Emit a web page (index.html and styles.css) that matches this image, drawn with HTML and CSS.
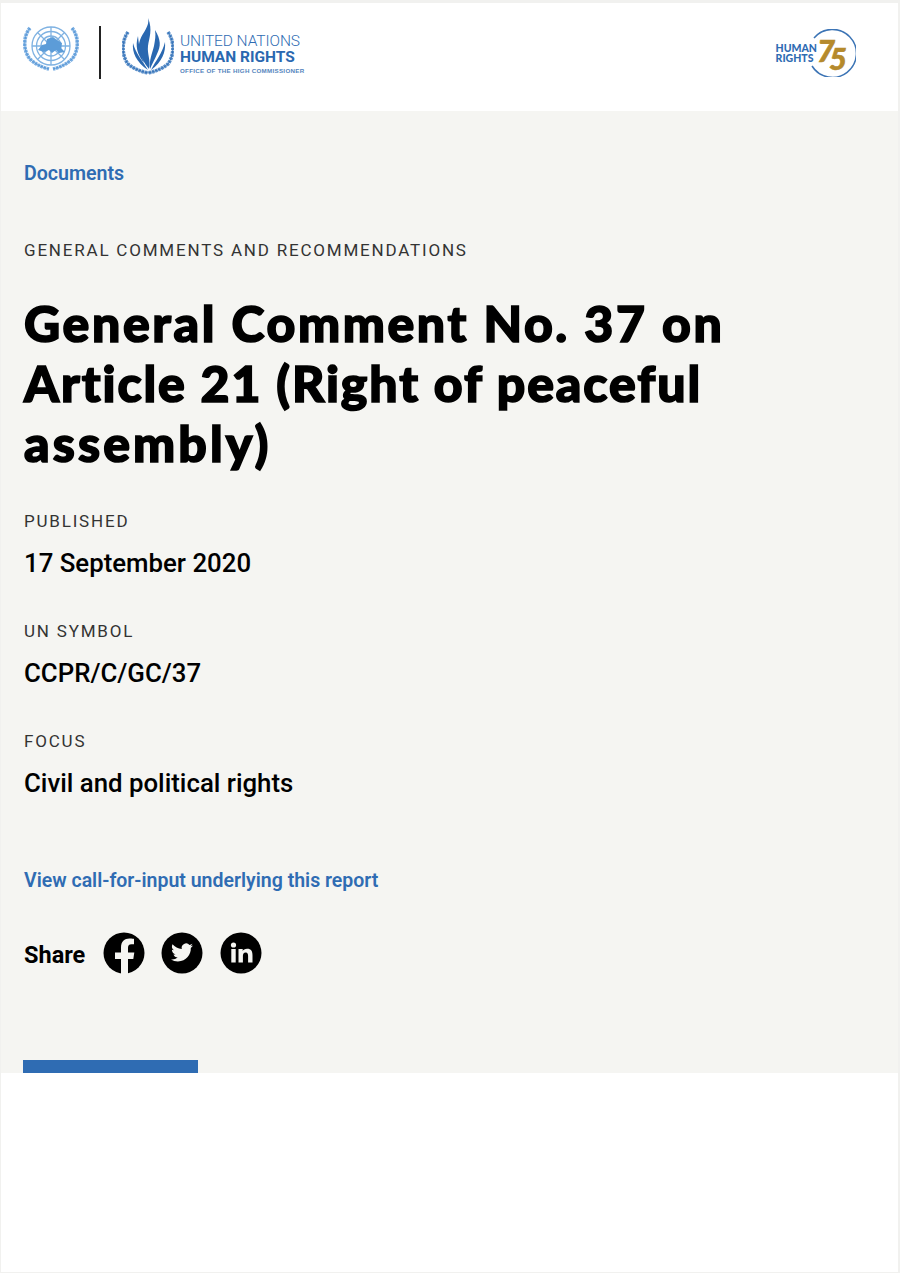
FILE: index.html
```html
<!DOCTYPE html>
<html lang="en">
<head>
<meta charset="utf-8">
<title>General Comment No. 37</title>
<link rel="stylesheet" href="styles.css">
</head>
<body>
<div class="page">
  <header class="top">
    <div class="brand">
      <svg class="un" width="56" height="48" viewBox="0 0 56 48" fill="none">
        <g stroke="#7fb2e2" stroke-width="1.300">
          <circle cx="28" cy="21" r="19"/><circle cx="28" cy="21" r="14.500"/><circle cx="28" cy="21" r="10"/>
          <path d="M28 2v38M9 21h38M14.500 7.500l27 27M41.500 7.500l-27 27"/>
        </g>
        <path d="M15 25l4-5 4-1 1-5 6-2 4 3 5 3-1 5 4 4-6 1-3-3-4 3-3-3-5 2z" fill="#5c9cd8"/>
        <g stroke="#79aee3" stroke-width="3.600" stroke-dasharray="2.600 .7" fill="none">
          <path d="M7 3C0 11 0 26 7 34c5 5 11 8 19 10"/>
          <path d="M49 3c7 8 7 23 0 31-5 5-11 8-19 10"/>
        </g>
        <path d="M7 3C0 11 0 26 7 34c5 5 11 8 19 10M49 3c7 8 7 23 0 31-5 5-11 8-19 10" stroke="#4f90d0" stroke-width=".8" fill="none"/>
      </svg>
      <span class="rule"></span>
      <svg class="flame" width="52" height="58" viewBox="0 0 52 58">
        <g fill="#2a68b0">
          <path d="M26 0C28 8 21 14 18 22 15 30 18 40 27 51 29 42 25 36 26 28 27 20 31 12 26 0z"/>
          <path d="M33 12C39 22 39 28 35 36 33 41 30 46 28 51 27 42 30 36 32 28 33 22 34 18 33 12z"/>
          <path d="M11 25C10 34 14 44 26 52 20 42 14 36 11 25z"/>
          <path d="M43 24C44 34 40 44 29 52 34 42 40 36 43 24z"/>
          <path d="M16 18C13 28 15 36 22 45 19 36 17 30 16 18z"/>
        </g>
        <g stroke="#5a8fca" stroke-width="3.600" stroke-dasharray="2.600 .7" fill="none">
          <path d="M6 14C-1 24 0 38 6 46c6 5 12 7 20 9"/>
          <path d="M46 14c7 10 6 24 0 32-6 5-12 7-20 9"/>
        </g>
        <path d="M6 14C-1 24 0 38 6 46c6 5 12 7 20 9M46 14c7 10 6 24 0 32-6 5-12 7-20 9" stroke="#2a68b0" stroke-width=".8" fill="none"/>
      </svg>
      <div class="ohchr">
        <span class="ohchr-a">UNITED NATIONS</span>
        <span class="ohchr-b">HUMAN RIGHTS</span>
        <span class="ohchr-c">OFFICE OF THE HIGH COMMISSIONER</span>
      </div>
    </div>
    <div class="hr75">
      <div class="hr75-text"><span>HUMAN</span><span>RIGHTS</span></div>
      <svg class="hr75-mark" width="48" height="48" viewBox="0 0 48 48" fill="none">
        <path d="M6 9A24 24 0 1 1 4 37" stroke="#3c74b5" stroke-width="1.500"/>
        <text class="hr75-num" x="9 21" y="33 41">75</text>
      </svg>
    </div>
  </header>
  <main class="panel">
    <a class="crumb" href="#">Documents</a>
    <p class="eyebrow">GENERAL COMMENTS AND RECOMMENDATIONS</p>
    <h1 class="title"><span class="line-a">General Comment No. 37 on</span> <span class="line-b">Article 21 (Right of peaceful</span> <span class="line-c">assembly)</span></h1>
    <dl class="meta">
      <dt>PUBLISHED</dt><dd>17 September 2020</dd>
      <dt>UN SYMBOL</dt><dd>CCPR/C/GC/37</dd>
      <dt>FOCUS</dt><dd>Civil and political rights</dd>
    </dl>
    <a class="input-link" href="#">View call-for-input underlying this report</a>
    <div class="share">
      <span class="share-label">Share</span>
      <svg class="social" width="42" height="42" viewBox="0 0 42 42">
        <circle cx="21" cy="21" r="20.500" fill="#000"/>
        <path d="M18 42V27h-6v-6.500h6v-5c0-6 3.500-9 8.500-9 2.500 0 4.500.4 4.500.4v5.400h-2.500c-2.800 0-3.500 1.700-3.500 3.500v4.700h6.300l-1 6.500H25v15z" fill="#f5f5f2"/>
      </svg>
      <svg class="social" width="42" height="42" viewBox="0 0 42 42">
        <circle cx="21" cy="21" r="20.500" fill="#000"/>
        <path d="M32 13.600c-.8.400-1.700.6-2.600.7.900-.6 1.600-1.400 2-2.500-.9.500-1.800.9-2.900 1.100a4.500 4.500 0 0 0-7.700 4.100c-3.700-.2-7-2-9.300-4.700-1.200 2.100-.6 4.700 1.400 6-.7 0-1.400-.2-2-.5 0 2.200 1.500 4 3.600 4.500-.7.200-1.400.2-2 .1.600 1.800 2.200 3.100 4.200 3.100a9 9 0 0 1-6.700 1.900c2 1.300 4.400 2 6.900 2 8.400 0 13.200-7.100 12.900-13.400.9-.6 1.600-1.400 2.200-2.400z" fill="#f5f5f2"/>
      </svg>
      <svg class="social" width="42" height="42" viewBox="0 0 42 42">
        <circle cx="21" cy="21" r="20.500" fill="#000"/>
        <g fill="#f5f5f2">
          <circle cx="13.500" cy="13" r="2.600"/>
          <rect x="11.300" y="17" width="4.400" height="13.500"/>
          <path d="M18.500 17h4.200v1.900c.7-1.200 2.200-2.200 4.400-2.200 4.200 0 5.400 2.700 5.400 6.800v7h-4.400v-6.200c0-1.900-.3-3.700-2.400-3.700s-2.800 1.600-2.800 3.500v6.400h-4.400z"/>
        </g>
      </svg>
    </div>
    <div class="tab-bar"></div>
  </main>
</div>
</body>
</html>
```

FILE: styles.css
```css
* { box-sizing: border-box; }
html, body { margin: 0; padding: 0; background: #fff; }
body { font-family: Roboto, "Liberation Sans", sans-serif; color: #000; }
.page { width: 900px; height: 1273px; background: #fff; border-style: solid; border-color: #f1f1ef; border-width: 3px 2px 1px 1px; }
.top { height: 108px; background: #fff; display: flex; justify-content: space-between; padding: 14px 42px 0 22px; }
.brand { display: flex; align-items: flex-start; }
.un { margin-top: 8px; }
.rule { width: 2px; height: 53px; background: #222; margin: 9px 0 0 20px; }
.flame { margin: 1px 0 0 21px; }
.ohchr { display: flex; flex-direction: column; margin: 16px 0 0 6px; color: #2a68b0; font-family: Roboto, sans-serif; white-space: nowrap; }
.ohchr-a { font-size: 15.500px; line-height: 16px; font-weight: 300; letter-spacing: -.08px; color: #2f6cb3; }
.ohchr-b { font-size: 15.500px; line-height: 16px; font-weight: 700; letter-spacing: 0; }
.ohchr-c { font-family: "Liberation Sans", sans-serif; font-size: 6.200px; line-height: 11px; font-weight: 700; letter-spacing: .3px; color: #5585bd; }
.hr75 { display: flex; align-items: center; height: 48px; margin-top: 12px; }
.hr75-text { display: flex; flex-direction: column; font: 900 10.500px/10.500px Lato, sans-serif; color: #2f6cb3; margin-right: -9px; }
.hr75-num { font: italic 900 31px Lato, sans-serif; fill: #b58a2c; stroke: #b58a2c; stroke-width: .6px; }
.panel { height: 962px; background: #f5f5f2; padding: 52px 0 0 23px; display: flex; flex-direction: column; align-items: flex-start; }
.crumb { font-size: 19.600px; line-height: 22px; font-weight: 600; color: #2f6cb3; text-decoration: none; }
.eyebrow { margin: 54px 0 0; font-size: 17px; line-height: 22px; letter-spacing: 1.800px; color: #333; }
.title { margin: 32px 0 0; width: 780px; font-family: Lato, sans-serif; font-weight: 900; font-size: 50px; line-height: 60px; -webkit-text-stroke: 1.600px #000; }
.line-a, .line-b, .line-c { display: block; }
.line-a { letter-spacing: 2.600px; }
.line-b { letter-spacing: 1.900px; }
.line-c { letter-spacing: 3.100px; }
.meta { margin: 37px 0 0; }
.meta dt { font-size: 17px; line-height: 22px; letter-spacing: 1.800px; color: #333; }
.meta dd { margin: 14px 0 40px; font-size: 25.800px; line-height: 34px; font-weight: 500; }
.input-link { margin-top: 30px; font-size: 19.500px; line-height: 22px; font-weight: 600; color: #2f6cb3; text-decoration: none; }
.share { display: flex; align-items: center; gap: 16.500px; margin-top: 40px; }
.share-label { font-size: 23.500px; font-weight: 700; width: 63px; margin-top: 4px; margin-right: -1px; }
.tab-bar { width: 175px; height: 13px; background: #2f6cb3; margin: auto 0 0 -1px; }
```
